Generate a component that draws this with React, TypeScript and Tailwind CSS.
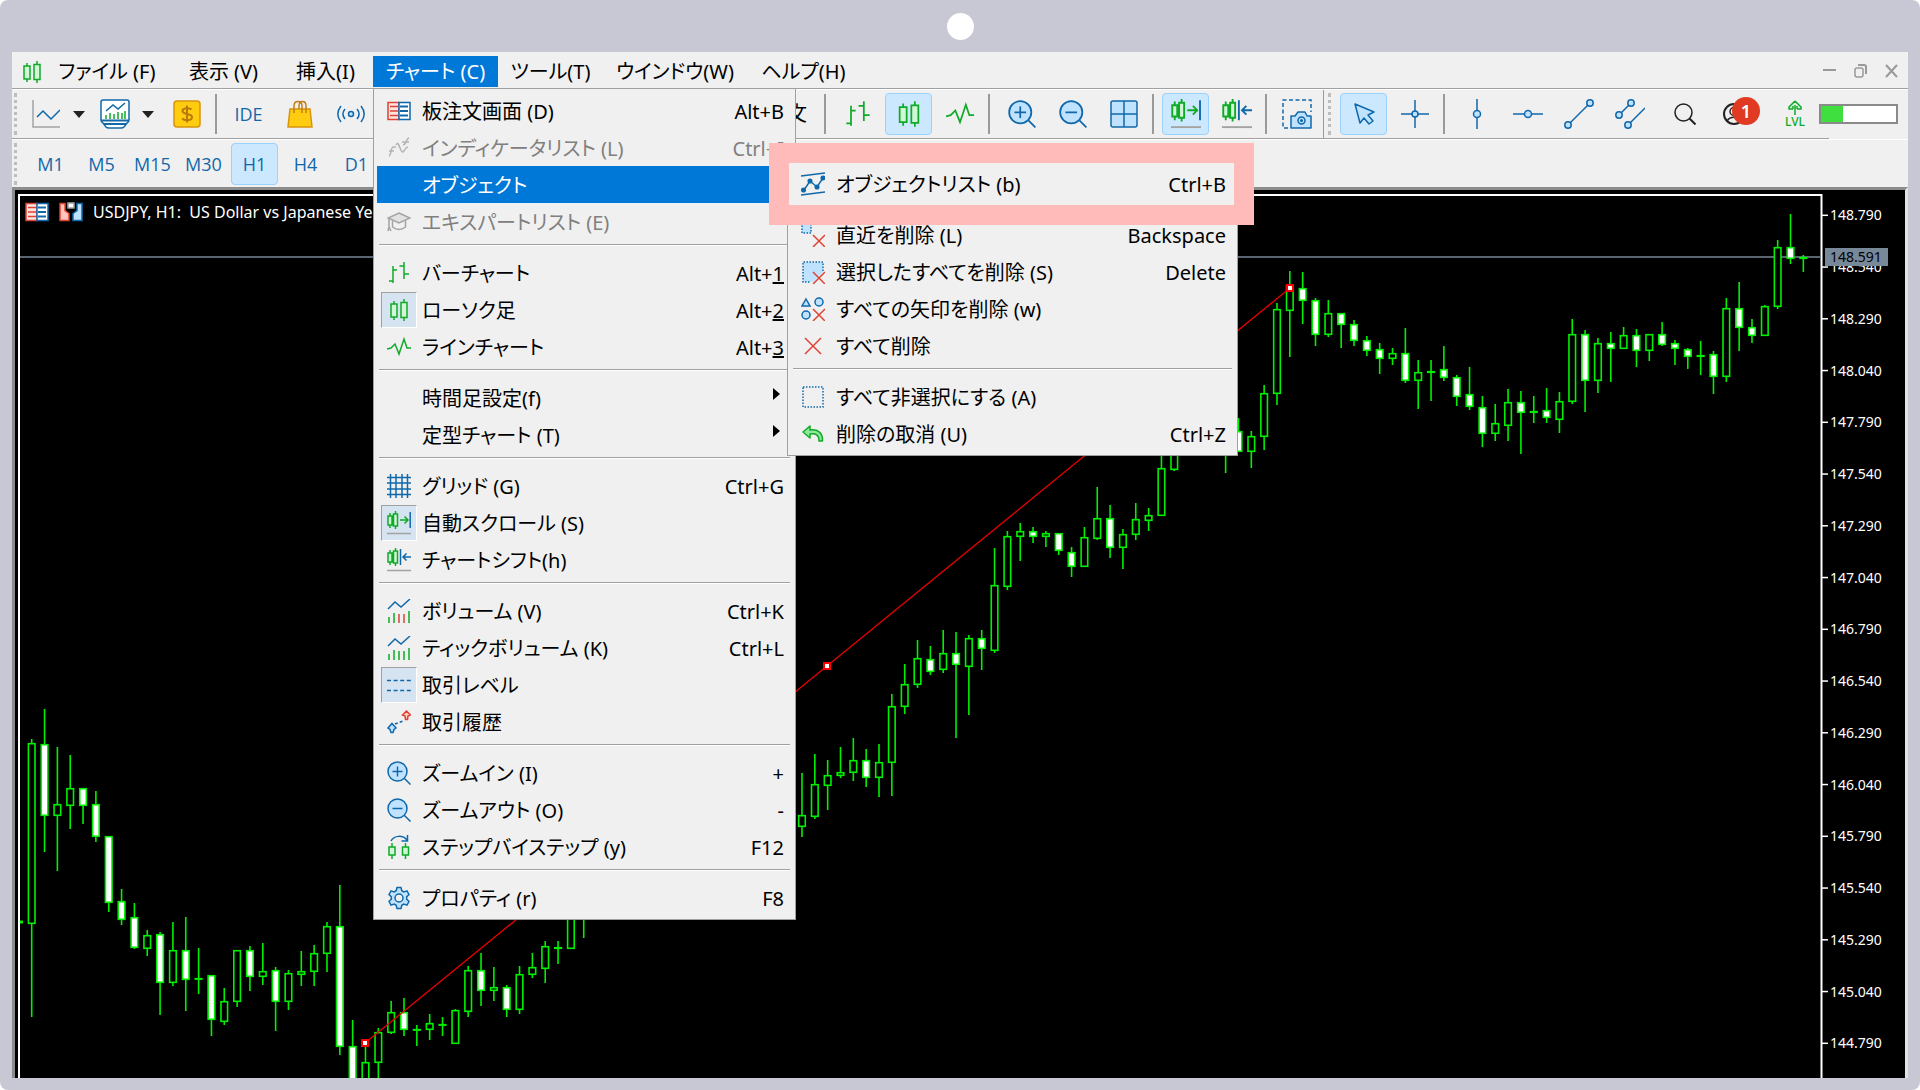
import type { ReactNode } from "react";
import clsx from "clsx";

const BLUE = "#1068ab";
const SKY = "#bfe3ff";
const GREEN = "#0faa28";
const MINT = "#d2f7d6";
const RED = "#dd4232";
const GRAY = "#a3a3a3";

/* ---------- icons ---------- */

function Icon({ size = 24, box = 24, children }: { size?: number; box?: number; children: ReactNode }) {
  return (
    <svg width={size} height={size} viewBox={`0 0 ${box} ${box}`} fill="none" stroke={BLUE} strokeWidth="1.5" className="shrink-0" aria-hidden="true">
      {children}
    </svg>
  );
}

type IconProps = { size?: number };

const BookIcon = ({ size }: IconProps) => (
  <Icon size={size}>
    <path d="M12 3.5H1v17h11z" fill="#ffe3e0" stroke={RED} />
    <path d="M12 3.5h11v17H12z" fill="#fff" />
    <path d="M3 7.5h8M3 12h8M3 16.5h8" stroke={RED} />
    <path d="M13 7.5h8M13 12h8M13 16.5h8" strokeWidth="2" />
  </Icon>
);

const DepthIcon = () => (
  <Icon>
    <path d="M1 3.5h5v7l4 3v7H1z" fill="#ffc4c0" stroke={RED} />
    <path d="M23 3.5h-5v7l-4 3v7h9z" fill={SKY} />
    <path d="M9 3h6v5H9z" fill="#fff" stroke={GRAY} />
  </Icon>
);

const IndicatorIcon = () => (
  <Icon>
    <path d="M2 20c2 0 2-9 4-9h3M2 15h5M9 9c3-6 4 8 7 7 2-1 2-5 5-5M16 9c4 0 3-7 6-7M15 6h7" stroke="#b4b4b4" />
  </Icon>
);

const CapIcon = () => (
  <Icon>
    <path d="M12 3 23 8l-11 5L1 8z" fill="#e2e2e2" stroke={GRAY} />
    <path d="M5.500 10.500V17c4 3 9 3 13 0v-6.500M2 9v9M1 21l1-4 2 4" stroke={GRAY} />
  </Icon>
);

const BarsIcon = ({ size }: IconProps) => (
  <Icon size={size}>
    <path d="M6 5v17M2 20h4M6 9h4M17 1v17M12.500 5H17M17 13h5" stroke={GREEN} />
  </Icon>
);

const CandlesIcon = ({ size }: IconProps) => (
  <Icon size={size}>
    <path d="M7 3v19M17 1v22" stroke={GREEN} />
    <path d="M4 6h6v13H4zM14 4.500h6v15h-6z" fill={MINT} stroke={GREEN} />
  </Icon>
);

const LineIcon = ({ size }: IconProps) => (
  <Icon size={size}>
    <path d="m0 14 4-1 4-4 4 10 5-15 3 9h4" stroke={GREEN} />
  </Icon>
);

const GridIcon = () => (
  <Icon>
    <path d="M3.500 0v24M9 0v24M15 0v24M20.500 0v24M0 3.500h24M0 9h24M0 15h24M0 20.500h24" />
  </Icon>
);

function SmallCandles() {
  return (
    <>
      <path d="M3 2v15M8.500 0v18" stroke={GREEN} />
      <path d="M1 5h4v9H1zM6.500 3h4v12h-4z" fill={MINT} stroke={GREEN} />
      <path d="M0 22.500h24" stroke={GRAY} />
    </>
  );
}

const AutoScrollIcon = ({ size }: IconProps) => (
  <Icon size={size}>
    <SmallCandles />
    <path d="M13 9h8M17.500 5.500 21 9l-3.500 3.500" stroke={GREEN} />
    <path d="M23.200 1v16" />
  </Icon>
);

const ShiftIcon = ({ size }: IconProps) => (
  <Icon size={size}>
    <SmallCandles />
    <path d="M13.500 1v16M24 9h-8M19.500 5.500 16 9l3.500 3.500" />
  </Icon>
);

const VolumeIcon = ({ mixed }: { mixed?: boolean }) => (
  <Icon>
    <path d="m1 10 7-7 6 5 9-8" />
    <path d="M2 18v6M7 14v10M22 12v12" stroke={GREEN} />
    <path d="M12 15v9M17 15v9" stroke={mixed ? RED : GREEN} />
  </Icon>
);

const LevelsIcon = () => (
  <Icon>
    <path d="M0 7.500h24M0 17.500h24" strokeDasharray="4 2.600" />
  </Icon>
);

const HistoryIcon = () => (
  <Icon>
    <path d="m5 13.500 4 4.500-2 1.500-1 3H4l-1-3L1 18z" fill={SKY} />
    <path d="m8 14 8-3" strokeDasharray="3 2" />
    <path d="m19.500 1 4 4-2.500 1-.500 3.500h-2L18 6l-2.500-1z" fill="#ffc9c4" stroke={RED} />
  </Icon>
);

const ZoomIcon = ({ size, plus }: { size?: number; plus?: boolean }) => (
  <Icon size={size}>
    <circle cx="10.500" cy="10.500" r="9.500" fill={SKY} />
    <path d="m17.500 17.500 6 6M5.500 10.500h10" />
    {plus && <path d="M10.500 5.500v10" />}
  </Icon>
);

const StepIcon = () => (
  <Icon>
    <path d="M4 6c3-6 12-6 16-1M20.500 0v6h-6" />
    <path d="M5 8v16M18.500 8v16" stroke={GREEN} />
    <path d="M2 12h6v8H2zM15.500 12h6v8h-6z" fill={MINT} stroke={GREEN} />
  </Icon>
);

const GearIcon = () => (
  <Icon>
    <path
      d="M10 1.500h4l.800 3.200 2 1.200 3.200-1 2 3.600-2.300 2.300v2.400l2.300 2.300-2 3.600-3.200-1-2 1.200-.800 3.200h-4l-.800-3.200-2-1.200-3.200 1-2-3.600 2.300-2.300v-2.400L2 8.500l2-3.600 3.200 1 2-1.200z"
      fill={SKY}
    />
    <circle cx="12" cy="12" r="4" fill="#f0f0f0" />
  </Icon>
);

const ObjectListIcon = () => (
  <Icon>
    <path d="M0 4 24 1M0 23l24-3M3 18l6-9 7 6 6-9" />
    <g fill={BLUE}>
      <circle cx="2.500" cy="18" r="1.800" />
      <circle cx="9" cy="9" r="1.800" />
      <circle cx="16" cy="15" r="1.800" />
      <circle cx="22" cy="6" r="1.800" />
    </g>
  </Icon>
);

const Cross = () => <path d="m12 12 12 12M24 12 12 24" stroke={RED} />;

const DeleteLastIcon = () => (
  <Icon>
    <path d="M1 1h9v9H1z" fill={SKY} strokeDasharray="1.500 1.500" />
    <Cross />
  </Icon>
);

const DeleteSelectedIcon = () => (
  <Icon>
    <path d="M2 2h20v10L12 22H2z" fill={SKY} stroke="none" />
    <path d="M22 11V2H2v20h8" strokeDasharray="1.500 1.500" />
    <Cross />
  </Icon>
);

const DeleteArrowsIcon = () => (
  <Icon>
    <path d="M5 2 9 9H1z" fill={SKY} />
    <circle cx="18" cy="5" r="4" fill={SKY} />
    <circle cx="5" cy="18" r="4" fill={SKY} />
    <Cross />
  </Icon>
);

const DeleteAllIcon = () => (
  <Icon>
    <path d="m4 4 16 16M20 4 4 20" stroke={RED} />
  </Icon>
);

const UnselectIcon = () => (
  <Icon>
    <path d="M2 2h20v20H2z" strokeDasharray="1.500 1.500" />
  </Icon>
);

const UndoIcon = () => (
  <Icon>
    <path d="M9 4 2 10l7 6v-4c6-1 9 1 9 7h3.500C22 11 17 7 9 8z" fill="#8fe89b" stroke={GREEN} strokeLinejoin="round" />
  </Icon>
);

const PolylineIcon = () => (
  <Icon size={28} box={28}>
    <path d="M1 0v27h27" stroke={GRAY} />
    <path d="m5 17 6-6 8 8 9-9" />
  </Icon>
);

const TemplateIcon = () => (
  <Icon size={30} box={30}>
    <path d="M3 1h24q2 0 2 2v18q0 2-2 3l-3 4q-1 1-3 1H9q-2 0-3-1l-3-4q-2-1-2-3V3q0-2 2-2z" fill="#fff" />
    <path d="M1 21.500h28M4 25h22" strokeWidth="2" />
    <path d="m6 12 7-6 5 4 7-6" />
    <path d="M6 16v4M10 14v6M14 15v5M18 13v7M22 14v6M25 12v8" stroke={GREEN} />
  </Icon>
);

const DollarIcon = () => (
  <Icon size={28} box={28}>
    <rect x="1" y="1" width="26" height="26" rx="3" fill="#ffcc10" stroke="#d8940c" />
    <path d="M18.500 9.500c-2-2-9-2-9 1.500 0 4 9.500 2 9.500 6 0 4-7.500 4-9.800 1.500M14 5.500v17" stroke="#b87a08" strokeWidth="2" />
  </Icon>
);

const BagIcon = () => (
  <Icon size={28} box={28}>
    <path d="M4 9h20l2 18H2z" fill="#ffcc10" stroke="#d8940c" />
    <path d="M8 13V6c0-6 8-6 8 0v7M13 9V6c0-6 7-6 7 0v7" stroke="#c07f14" />
  </Icon>
);

const SignalIcon = () => (
  <Icon size={28} box={28}>
    <circle cx="14" cy="14" r="2.500" fill={SKY} />
    <path d="M8 9c-2.500 3-2.500 7 0 10M20 9c2.500 3 2.500 7 0 10M4 6c-4 5-4 11 0 16M24 6c4 5 4 11 0 16" />
  </Icon>
);

const TileIcon = () => (
  <Icon size={28} box={28}>
    <rect x="1" y="1" width="26" height="26" rx="2" fill={SKY} />
    <path d="M14 1v26M1 14h26" />
  </Icon>
);

const CameraIcon = () => (
  <Icon size={30} box={30}>
    <path d="M6 29H1V1h28v12" strokeDasharray="4 2.500" />
    <path d="M9 17h4l3-4h7l2 4h4v12H9z" fill={SKY} strokeLinejoin="round" />
    <circle cx="19.500" cy="21.500" r="3.500" />
    <circle cx="19.500" cy="21.500" r=".8" />
  </Icon>
);

const CursorIcon = () => (
  <Icon size={26} box={26}>
    <path d="M4 3 9 22l4-5 5 6 4-3-5-6 6-3z" fill={SKY} strokeLinejoin="round" />
  </Icon>
);

const CrosshairIcon = () => (
  <Icon size={28} box={28}>
    <path d="M14 0v28M0 14h28" />
    <circle cx="14" cy="14" r="3" fill={SKY} />
  </Icon>
);

const VLineIcon = () => (
  <Icon size={30} box={30}>
    <path d="M15 0v30" />
    <circle cx="15" cy="15" r="3.500" fill={SKY} />
  </Icon>
);

const HLineIcon = () => (
  <Icon size={30} box={30}>
    <path d="M0 15h30" />
    <circle cx="15" cy="15" r="3.500" fill={SKY} />
  </Icon>
);

const TrendIcon = () => (
  <Icon size={30} box={30}>
    <path d="M4 26 26 4" />
    <circle cx="4" cy="26" r="3.200" fill={SKY} />
    <circle cx="26" cy="4" r="3.200" fill={SKY} />
  </Icon>
);

const ChannelIcon = () => (
  <Icon size={30} box={30}>
    <path d="M4 16 16 4M13 26 30 9" />
    <circle cx="4" cy="16" r="3.200" fill={SKY} />
    <circle cx="16" cy="4" r="3.200" fill={SKY} />
    <circle cx="13" cy="26" r="3.200" fill={SKY} />
  </Icon>
);

const SearchIcon = () => (
  <Icon size={22} box={22}>
    <circle cx="9.500" cy="9.500" r="8.500" stroke="#222" />
    <path d="m15.500 15.500 6 6" stroke="#222" strokeWidth="2" />
  </Icon>
);

const AccountIcon = () => (
  <Icon size={22} box={22}>
    <circle cx="11" cy="11" r="10" stroke="#222" strokeWidth="2" />
    <circle cx="11" cy="8.500" r="4" stroke="#222" />
    <path d="M4 18c3-5 11-5 14 0" stroke="#222" />
  </Icon>
);

const Caret = () => (
  <svg width="12" height="8" viewBox="0 0 12 8" aria-hidden="true">
    <path d="M0 1h12L6 8z" fill="#222" />
  </svg>
);

/* ---------- menus ---------- */

type MenuEntry = {
  label: string;
  icon?: ReactNode;
  keys?: string;
  underlineLast?: boolean;
  disabled?: boolean;
  checked?: boolean;
  active?: boolean;
  arrow?: boolean;
};

const chartMenu: MenuEntry[][] = [
  [
    { label: "板注文画面 (D)", icon: <BookIcon />, keys: "Alt+B" },
    { label: "インディケータリスト (L)", icon: <IndicatorIcon />, keys: "Ctrl+I", disabled: true },
    { label: "オブジェクト", active: true },
    { label: "エキスパートリスト (E)", icon: <CapIcon />, disabled: true },
  ],
  [
    { label: "バーチャート", icon: <BarsIcon />, keys: "Alt+1", underlineLast: true },
    { label: "ローソク足", icon: <CandlesIcon />, keys: "Alt+2", underlineLast: true, checked: true },
    { label: "ラインチャート", icon: <LineIcon />, keys: "Alt+3", underlineLast: true },
  ],
  [
    { label: "時間足設定(f)", arrow: true },
    { label: "定型チャート (T)", arrow: true },
  ],
  [
    { label: "グリッド (G)", icon: <GridIcon />, keys: "Ctrl+G" },
    { label: "自動スクロール (S)", icon: <AutoScrollIcon />, checked: true },
    { label: "チャートシフト(h)", icon: <ShiftIcon /> },
  ],
  [
    { label: "ボリューム (V)", icon: <VolumeIcon mixed />, keys: "Ctrl+K" },
    { label: "ティックボリューム (K)", icon: <VolumeIcon />, keys: "Ctrl+L" },
    { label: "取引レベル", icon: <LevelsIcon />, checked: true },
    { label: "取引履歴", icon: <HistoryIcon /> },
  ],
  [
    { label: "ズームイン (I)", icon: <ZoomIcon plus />, keys: "+" },
    { label: "ズームアウト (O)", icon: <ZoomIcon />, keys: "-" },
    { label: "ステップバイステップ (y)", icon: <StepIcon />, keys: "F12" },
  ],
  [{ label: "プロパティ (r)", icon: <GearIcon />, keys: "F8" }],
];

const objectMenu: MenuEntry[][] = [
  [{ label: "オブジェクトリスト (b)", icon: <ObjectListIcon />, keys: "Ctrl+B" }],
  [
    { label: "直近を削除 (L)", icon: <DeleteLastIcon />, keys: "Backspace" },
    { label: "選択したすべてを削除 (S)", icon: <DeleteSelectedIcon />, keys: "Delete" },
    { label: "すべての矢印を削除 (w)", icon: <DeleteArrowsIcon /> },
    { label: "すべて削除", icon: <DeleteAllIcon /> },
  ],
  [
    { label: "すべて非選択にする (A)", icon: <UnselectIcon /> },
    { label: "削除の取消 (U)", icon: <UndoIcon />, keys: "Ctrl+Z" },
  ],
];

function MenuRow({ entry }: { entry: MenuEntry }) {
  const { label, icon, keys, underlineLast, disabled, checked, active, arrow } = entry;
  return (
    <button
      type="button"
      role="menuitem"
      disabled={disabled}
      className={clsx(
        "flex h-[37px] w-full items-center pr-2 pl-1 text-left",
        active && "bg-[#0078d7] text-white",
        disabled && "text-[#808080]"
      )}
    >
      <span
        className={clsx(
          "flex size-9 shrink-0 items-center justify-center",
          checked && "border border-t-[#a0a0a0] border-r-white border-b-white border-l-[#a0a0a0] bg-[#d6e4f2]"
        )}
      >
        {icon}
      </span>
      <span className="ml-[5px] flex-1 pt-0.5 whitespace-nowrap">{label}</span>
      {keys && (
        <span className="pt-0.5">
          {underlineLast ? (
            <>
              {keys.slice(0, -1)}
              <span className="underline">{keys.slice(-1)}</span>
            </>
          ) : (
            keys
          )}
        </span>
      )}
      {arrow && (
        <svg width="7" height="12" viewBox="0 0 7 12" className="mr-1 mb-2" aria-hidden="true">
          <path d="M0 0v12l7-6z" fill="#000" />
        </svg>
      )}
    </button>
  );
}

function Menu({ groups, className }: { groups: MenuEntry[][]; className: string }) {
  return (
    <div role="menu" className={clsx("absolute border border-[#a0a0a0] bg-[#f0f0f0] p-[3px] text-black", className)}>
      {groups.map((group, i) => (
        <div key={i}>
          {i > 0 && (
            <div className="h-[14px] px-0.5 pt-1">
              <div className="h-0.5 border-b border-b-white bg-[#a0a0a0]" />
            </div>
          )}
          {group.map((entry) => (
            <MenuRow key={entry.label} entry={entry} />
          ))}
        </div>
      ))}
    </div>
  );
}

const menuItem = "flex h-[31px] items-center justify-center whitespace-nowrap";

function MenuBar() {
  return (
    <nav className="relative z-10 flex h-[37px] items-start border-b border-[#a0a0a0] pt-1 pl-2">
      <div className="flex h-[31px] w-[25px] items-center">
        <CandlesIcon />
      </div>
      <button type="button" className={clsx(menuItem, "w-[124px]")}>ファイル (F)</button>
      <button type="button" className={clsx(menuItem, "w-[109px]")}>表示 (V)</button>
      <button type="button" className={clsx(menuItem, "w-[95px]")}>挿入(I)</button>
      <div className="relative">
        <button type="button" aria-expanded="true" className={clsx(menuItem, "w-[125px] bg-[#0078d7] text-white")}>
          チャート (C)
        </button>
        <Menu groups={chartMenu} className="top-8 left-0 w-[423px]" />
        <Menu groups={objectMenu} className="top-[105px] left-[414px] w-[451px]" />
        {/* highlighted entry */}
        <div className="pointer-events-none absolute top-[87px] left-[396px] h-[82px] w-[485px] border-20 border-[#ffbaba]" />
      </div>
      <button type="button" className={clsx(menuItem, "w-[105px]")}>ツール(T)</button>
      <button type="button" className={clsx(menuItem, "w-[144px]")}>ウインドウ(W)</button>
      <button type="button" className={clsx(menuItem, "w-[113px]")}>ヘルプ(H)</button>
      <div className="mt-2 mr-2.5 ml-auto flex gap-[18px] text-[#999]">
        <button type="button" aria-label="最小化">
          <svg width="13" height="14" viewBox="0 0 13 14" fill="none" stroke="currentColor" strokeWidth="2">
            <path d="M0 6h13" />
          </svg>
        </button>
        <button type="button" aria-label="元に戻す">
          <svg width="13" height="14" viewBox="0 0 13 14" fill="none" stroke="currentColor" strokeWidth="1.500">
            <rect x="1" y="4" width="8" height="9" rx="2" />
            <path d="M4 1h6q2 0 2 2v7" strokeWidth="2" />
          </svg>
        </button>
        <button type="button" aria-label="閉じる">
          <svg width="13" height="14" viewBox="0 0 13 14" fill="none" stroke="currentColor" strokeWidth="2">
            <path d="m1 1 11 12M12 1 1 13" />
          </svg>
        </button>
      </div>
    </nav>
  );
}

/* ---------- toolbars ---------- */

const Grip = () => <div className="h-[42px] w-1 shrink-0 border-l-3 border-dotted border-[#bdbdbd]" />;
const Sep = () => <div className="mr-1 ml-px h-10 w-0.5 shrink-0 bg-[#9a9a9a]" />;

function ToolButton({
  label,
  pressed,
  className = "w-[47px]",
  children,
}: {
  label: string;
  pressed?: boolean;
  className?: string;
  children: ReactNode;
}) {
  return (
    <button
      type="button"
      aria-label={label}
      aria-pressed={pressed}
      className={clsx(
        "flex h-[42px] shrink-0 items-center justify-center rounded",
        pressed && "border border-[#99d1ff] bg-[#cce8ff]",
        className
      )}
    >
      {children}
    </button>
  );
}

function MainToolbar() {
  return (
    <div className="overflow-hidden border-t border-white">
      <div className="flex h-12 items-center gap-1 pl-0.5">
        <Grip />
        <ToolButton label="チャート"><PolylineIcon /></ToolButton>
        <ToolButton label="チャート一覧" className="w-3.5 justify-start"><Caret /></ToolButton>
        <ToolButton label="定型"><TemplateIcon /></ToolButton>
        <ToolButton label="定型一覧" className="w-[17px] justify-start"><Caret /></ToolButton>
        <ToolButton label="銘柄"><DollarIcon /></ToolButton>
        <Sep />
        <ToolButton label="IDE" className="w-[47px] font-['Open_Sans'] text-lg text-[#1068ab]">IDE</ToolButton>
        <ToolButton label="マーケット"><BagIcon /></ToolButton>
        <ToolButton label="シグナル"><SignalIcon /></ToolButton>
        <ToolButton label="新規注文" className="w-[441px] justify-end pr-3">新規注文</ToolButton>
        <Sep />
        <ToolButton label="バーチャート"><BarsIcon size={28} /></ToolButton>
        <ToolButton label="ローソク足" pressed><CandlesIcon size={28} /></ToolButton>
        <ToolButton label="ラインチャート"><LineIcon size={28} /></ToolButton>
        <Sep />
        <ToolButton label="ズームイン"><ZoomIcon size={28} plus /></ToolButton>
        <ToolButton label="ズームアウト"><ZoomIcon size={28} /></ToolButton>
        <ToolButton label="並べる"><TileIcon /></ToolButton>
        <Sep />
        <ToolButton label="自動スクロール" pressed><AutoScrollIcon size={30} /></ToolButton>
        <ToolButton label="チャートシフト"><ShiftIcon size={30} /></ToolButton>
        <Sep />
        <ToolButton label="画像保存" className="w-11"><CameraIcon /></ToolButton>
        <div className="h-full w-px shrink-0 bg-[#9a9a9a]" />
        <Grip />
        <ToolButton label="カーソル" pressed className="ml-1 w-[47px]"><CursorIcon /></ToolButton>
        <ToolButton label="十字カーソル"><CrosshairIcon /></ToolButton>
        <Sep />
        <ToolButton label="垂直線"><VLineIcon /></ToolButton>
        <ToolButton label="水平線"><HLineIcon /></ToolButton>
        <ToolButton label="トレンドライン"><TrendIcon /></ToolButton>
        <ToolButton label="チャネル"><ChannelIcon /></ToolButton>
        <ToolButton label="検索" className="ml-1 w-[47px]"><SearchIcon /></ToolButton>
        <ToolButton label="アカウント" className="relative w-[47px] pr-1">
          <AccountIcon />
          <span className="absolute top-1 left-5 flex size-7 items-center justify-center rounded-full bg-[#e03a22] text-lg font-semibold text-white">
            1
          </span>
        </ToolButton>
        <ToolButton label="LVL" className="ml-3 w-10 flex-col text-xs leading-3 font-medium text-[#0faa28]">
          <svg width="14" height="16" viewBox="0 0 14 16" fill={MINT} stroke={GREEN} strokeWidth="1.500" aria-hidden="true">
            <path d="M7 1 1 7v2h4M7 1l6 6v2H9M5 9V6M9 9V6M7 5v10" />
          </svg>
          LVL
        </ToolButton>
        <div className="h-5 w-[79px] shrink-0 border-2 border-[#8a8a8a] bg-white">
          <div className="h-full w-[22px] bg-[#3fdf3f]" />
        </div>
      </div>
      <div className="mr-[79px] h-px bg-[#a0a0a0]" />
    </div>
  );
}

const timeframes = ["M1", "M5", "M15", "M30", "H1", "H4", "D1"];

function TimeframeToolbar() {
  return (
    <div className="border-t border-white">
      <div className="flex h-[47px] items-center gap-1 pl-0.5 font-['Open_Sans'] text-lg text-[#1068ab]">
        <Grip />
        <div className="ml-[5px] flex gap-1">
          {timeframes.map((tf) => (
            <ToolButton key={tf} label={tf} pressed={tf === "H1"}>
              {tf}
            </ToolButton>
          ))}
        </div>
      </div>
    </div>
  );
}

/* ---------- chart ---------- */

// slot, high, body top, body bottom, low, 1 = bearish (white body)
const candles = [
  [0, 739, 743, 924, 1017, 0], [1, 709, 744, 816, 852, 1], [2, 747, 804, 816, 871, 0], [3, 755, 788, 806, 829, 0],
  [4, 788, 788, 806, 824, 1], [5, 791, 804, 837, 842, 1], [6, 836, 836, 903, 912, 1], [7, 889, 901, 920, 925, 1],
  [8, 903, 917, 948, 949, 1], [9, 930, 935, 949, 956, 0], [10, 932, 934, 983, 1015, 1], [11, 922, 950, 983, 986, 0],
  [12, 917, 950, 980, 1011, 1], [13, 948, 978, 979, 994, 0], [14, 975, 975, 1020, 1036, 1], [15, 988, 1001, 1022, 1025, 0],
  [16, 950, 950, 1002, 1007, 0], [17, 946, 950, 977, 991, 1], [18, 943, 971, 977, 985, 0], [19, 967, 970, 1002, 1031, 1],
  [20, 970, 973, 1002, 1010, 0], [21, 951, 971, 975, 986, 0], [22, 945, 953, 972, 986, 0], [23, 922, 926, 954, 972, 0],
  [24, 885, 926, 1047, 1055, 1], [25, 1020, 1046, 1090, 1090, 1], [26, 1040, 1062, 1090, 1090, 0], [27, 1028, 1032, 1063, 1090, 0],
  [28, 1001, 1012, 1033, 1034, 0], [29, 998, 1012, 1030, 1036, 1], [30, 1025, 1029, 1030, 1046, 0], [31, 1014, 1023, 1030, 1040, 0],
  [32, 1017, 1024, 1025, 1036, 0], [33, 1009, 1010, 1044, 1044, 0], [34, 966, 970, 1012, 1017, 0], [35, 953, 970, 991, 1006, 1],
  [36, 967, 987, 991, 1001, 0], [37, 985, 987, 1010, 1017, 1], [38, 966, 974, 1010, 1014, 0], [39, 953, 967, 975, 978, 0],
  [40, 941, 946, 969, 983, 0], [41, 941, 947, 949, 964, 0], [42, 900, 900, 949, 949, 0], [43, 880, 890, 910, 938, 0],
  [60, 773, 815, 827, 837, 0], [61, 754, 784, 817, 819, 0], [62, 760, 775, 786, 810, 0], [63, 747, 772, 776, 778, 0],
  [64, 738, 760, 773, 781, 0], [65, 749, 760, 778, 787, 1], [66, 744, 762, 778, 797, 0], [67, 694, 706, 763, 796, 0],
  [68, 664, 684, 707, 714, 0], [69, 640, 658, 685, 688, 0], [70, 646, 659, 672, 675, 1], [71, 630, 653, 670, 673, 0],
  [72, 632, 653, 665, 738, 1], [73, 635, 638, 667, 715, 0], [74, 630, 638, 649, 670, 1], [75, 548, 585, 651, 653, 0],
  [76, 531, 536, 587, 590, 0], [77, 523, 531, 537, 561, 0], [78, 527, 531, 537, 543, 1], [79, 531, 533, 537, 547, 0],
  [80, 533, 533, 551, 555, 1], [81, 547, 552, 567, 577, 1], [82, 527, 537, 567, 567, 0], [83, 487, 518, 539, 540, 0],
  [84, 505, 518, 548, 558, 1], [85, 529, 534, 548, 569, 0], [86, 503, 519, 535, 540, 0], [87, 508, 515, 521, 531, 0],
  [88, 440, 468, 516, 516, 0], [89, 430, 440, 470, 471, 0], [93, 420, 430, 450, 473, 0], [94, 418, 431, 452, 452, 1],
  [95, 431, 436, 452, 468, 0], [96, 385, 393, 437, 450, 0], [97, 303, 309, 394, 405, 0], [98, 271, 285, 311, 357, 0],
  [99, 272, 288, 301, 324, 1], [100, 298, 300, 335, 346, 1], [101, 300, 313, 335, 337, 0], [102, 313, 313, 325, 348, 1],
  [103, 320, 324, 341, 346, 1], [104, 336, 340, 351, 356, 1], [105, 343, 349, 359, 374, 1], [106, 348, 353, 359, 365, 0],
  [107, 328, 353, 381, 383, 1], [108, 360, 372, 381, 409, 0], [109, 360, 371, 373, 401, 0], [110, 346, 369, 378, 381, 1],
  [111, 375, 377, 397, 406, 1], [112, 367, 394, 407, 410, 1], [113, 396, 407, 434, 447, 1], [114, 404, 423, 434, 441, 0],
  [115, 389, 402, 426, 441, 0], [116, 391, 402, 413, 454, 1], [117, 396, 411, 413, 423, 0], [118, 388, 410, 418, 423, 1],
  [119, 392, 401, 420, 433, 0], [120, 319, 334, 402, 404, 0], [121, 330, 334, 381, 412, 1], [122, 338, 343, 381, 393, 0],
  [123, 332, 343, 349, 382, 1], [124, 327, 335, 349, 349, 0], [125, 329, 335, 351, 367, 1], [126, 334, 334, 351, 361, 0],
  [127, 322, 334, 345, 346, 1], [128, 340, 343, 349, 365, 1], [129, 348, 349, 357, 369, 1], [130, 341, 355, 357, 375, 0],
  [131, 351, 354, 377, 394, 1], [132, 298, 308, 377, 382, 0], [133, 282, 308, 328, 351, 1], [134, 319, 327, 336, 343, 1],
  [135, 305, 306, 336, 336, 0], [136, 240, 247, 307, 309, 0], [137, 214, 247, 259, 264, 1], [138, 255, 257, 259, 272, 0],
];

const slotX = (slot: number) => 31.7 + slot * 12.838;

const handles = [
  [365, 1043],
  [827, 666],
  [1290, 288],
];

const prices = Array.from({ length: 17 }, (_, i) => ({
  y: 215.3 + i * 51.75,
  label: (148.79 - i * 0.25).toFixed(3),
}));

function PriceChart() {
  return (
    <div className="relative border-t-3 border-r-3 border-l-3 border-t-[#8c8c8c] border-r-[#e3e3e3] border-l-[#8c8c8c] bg-black">
      <svg viewBox="15 190 1890 888" className="block w-full" role="img" aria-label="USDJPY H1">
        <path d="M19 1078V195h1802.500v883" fill="none" stroke="#fff" strokeWidth="2" />
        <path d="M20 257h1801" stroke="#778899" strokeWidth="1.500" />

        <g stroke="#00f000" strokeWidth="1.600">
          <path d="M20 922h3" strokeWidth="3" />
          {candles.map(([slot, high, top, bottom, low, bearish]) => {
            const x = slotX(slot);
            return (
              <g key={slot}>
                <path d={`M${x} ${high}V${low}`} />
                <rect
                  x={x - 3.3}
                  y={top + 0.7}
                  width="6.600"
                  height={Math.max(bottom - top - 1.4, 0.4)}
                  fill={bearish ? "#fff" : "#000"}
                />
              </g>
            );
          })}
        </g>

        <path d="M365 1043 827 666 1290 288" fill="none" stroke="#e60000" strokeWidth="1.300" />
        {handles.map(([x, y]) => (
          <rect key={x} x={x - 3} y={y - 3} width="6" height="6" fill="#fff" stroke="#f00" strokeWidth="2" />
        ))}

        <g fontFamily="'Noto Sans', sans-serif" fontSize="14" fill="#fff">
          {prices.map(({ y, label }) => (
            <g key={label}>
              <path d={`M1822 ${y}h6`} stroke="#fff" strokeWidth="1.500" />
              <text x="1830" y={y + 5}>{label}</text>
            </g>
          ))}
          <rect x="1825" y="248" width="63" height="18" fill="#778899" />
          <text x="1830" y="262" fill="#000">148.591</text>
        </g>
      </svg>

      <div className="absolute top-2.5 left-2.5 flex items-center text-base text-white">
        <BookIcon />
        <span className="ml-2.5"><DepthIcon /></span>
        <span className="ml-2.5 whitespace-pre">USDJPY, H1:  US Dollar vs Japanese Yen</span>
      </div>
    </div>
  );
}

export default function App() {
  return (
    <div className="min-h-screen bg-white">
      <div className="min-h-screen rounded-lg bg-[#c8c8d5] px-3 pb-3">
        <div className="flex h-[52px] items-center justify-center">
          <div className="size-[27px] rounded-full bg-white" />
        </div>
        <div className="bg-[#f0f0f0] font-['Noto_Sans','Noto_Sans_CJK_JP',sans-serif] text-xl leading-6 text-black [font-feature-settings:'palt']">
          <MenuBar />
          <MainToolbar />
          <TimeframeToolbar />
          <PriceChart />
        </div>
      </div>
    </div>
  );
}
